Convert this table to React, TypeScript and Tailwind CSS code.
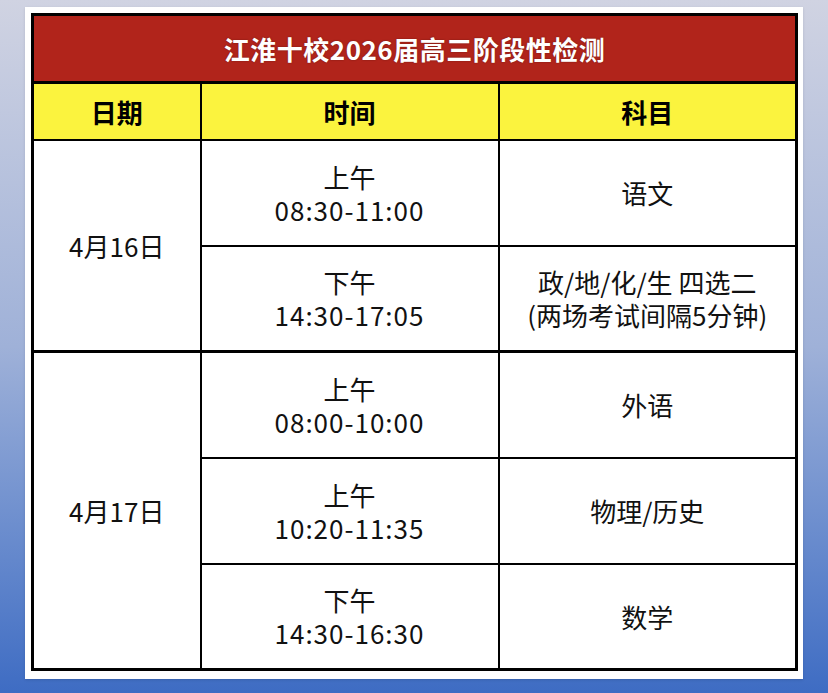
const rows = [
  { date: "4月16日", span: 2, period: "上午", time: "08:30-11:00", subject: ["语文"] },
  { period: "下午", time: "14:30-17:05", subject: ["政/地/化/生 四选二", "(两场考试间隔5分钟)"] },
  { date: "4月17日", span: 3, period: "上午", time: "08:00-10:00", subject: ["外语"] },
  { period: "上午", time: "10:20-11:35", subject: ["物理/历史"] },
  { period: "下午", time: "14:30-16:30", subject: ["数学"] },
]

export default function App() {
  return (
    <div
      className="w-[828px] h-[693px] pt-[7px] pl-[25px] bg-gradient-to-b from-[#d0d3e2] via-[#9fb1d8] to-[#3e6cc3] overflow-hidden"
      style={{ fontFamily: '"Noto Sans CJK SC", "Noto Sans", sans-serif' }}
    >
      <div className="w-[778px] pt-[6px] pl-[6px] pr-[8px] pb-[8px] bg-white shadow-sm">
        <table className="w-[764px] table-fixed border-collapse border-[3px] border-black text-[#111]">
          <colgroup>
            <col className="w-[168px]" />
            <col className="w-[298px]" />
            <col className="w-[298px]" />
          </colgroup>
          <thead>
            <tr className="h-[68px]">
              <th
                colSpan={3}
                className="bg-[#b1241b] text-white text-[26px] font-bold tracking-[0.5px] border-b-[3px] border-black [text-shadow:0_0_2px_rgba(0,0,0,0.35)]"
              >
                江淮十校2026届高三阶段性检测
              </th>
            </tr>
            <tr className="h-[57px] bg-[#fbf33e] text-[26px] font-bold text-black">
              <th className="border-2 border-black">日期</th>
              <th className="border-2 border-black">时间</th>
              <th className="border-2 border-black">科目</th>
            </tr>
          </thead>
          <tbody className="text-[26px] leading-[33px] text-center">
            {rows.map((r, i) => (
              <tr key={i} className={i === 2 ? "h-[106px] border-t-[3px] border-black" : "h-[106px]"}>
                {r.date && (
                  <td rowSpan={r.span} className="border-2 border-black">
                    {r.date}
                  </td>
                )}
                <td className="border-2 border-black">
                  <div>{r.period}</div>
                  <div className="tracking-[1px]">{r.time}</div>
                </td>
                <td className="border-2 border-black">
                  {r.subject.map((s) => (
                    <div key={s}>{s}</div>
                  ))}
                </td>
              </tr>
            ))}
          </tbody>
        </table>
      </div>
    </div>
  )
}
